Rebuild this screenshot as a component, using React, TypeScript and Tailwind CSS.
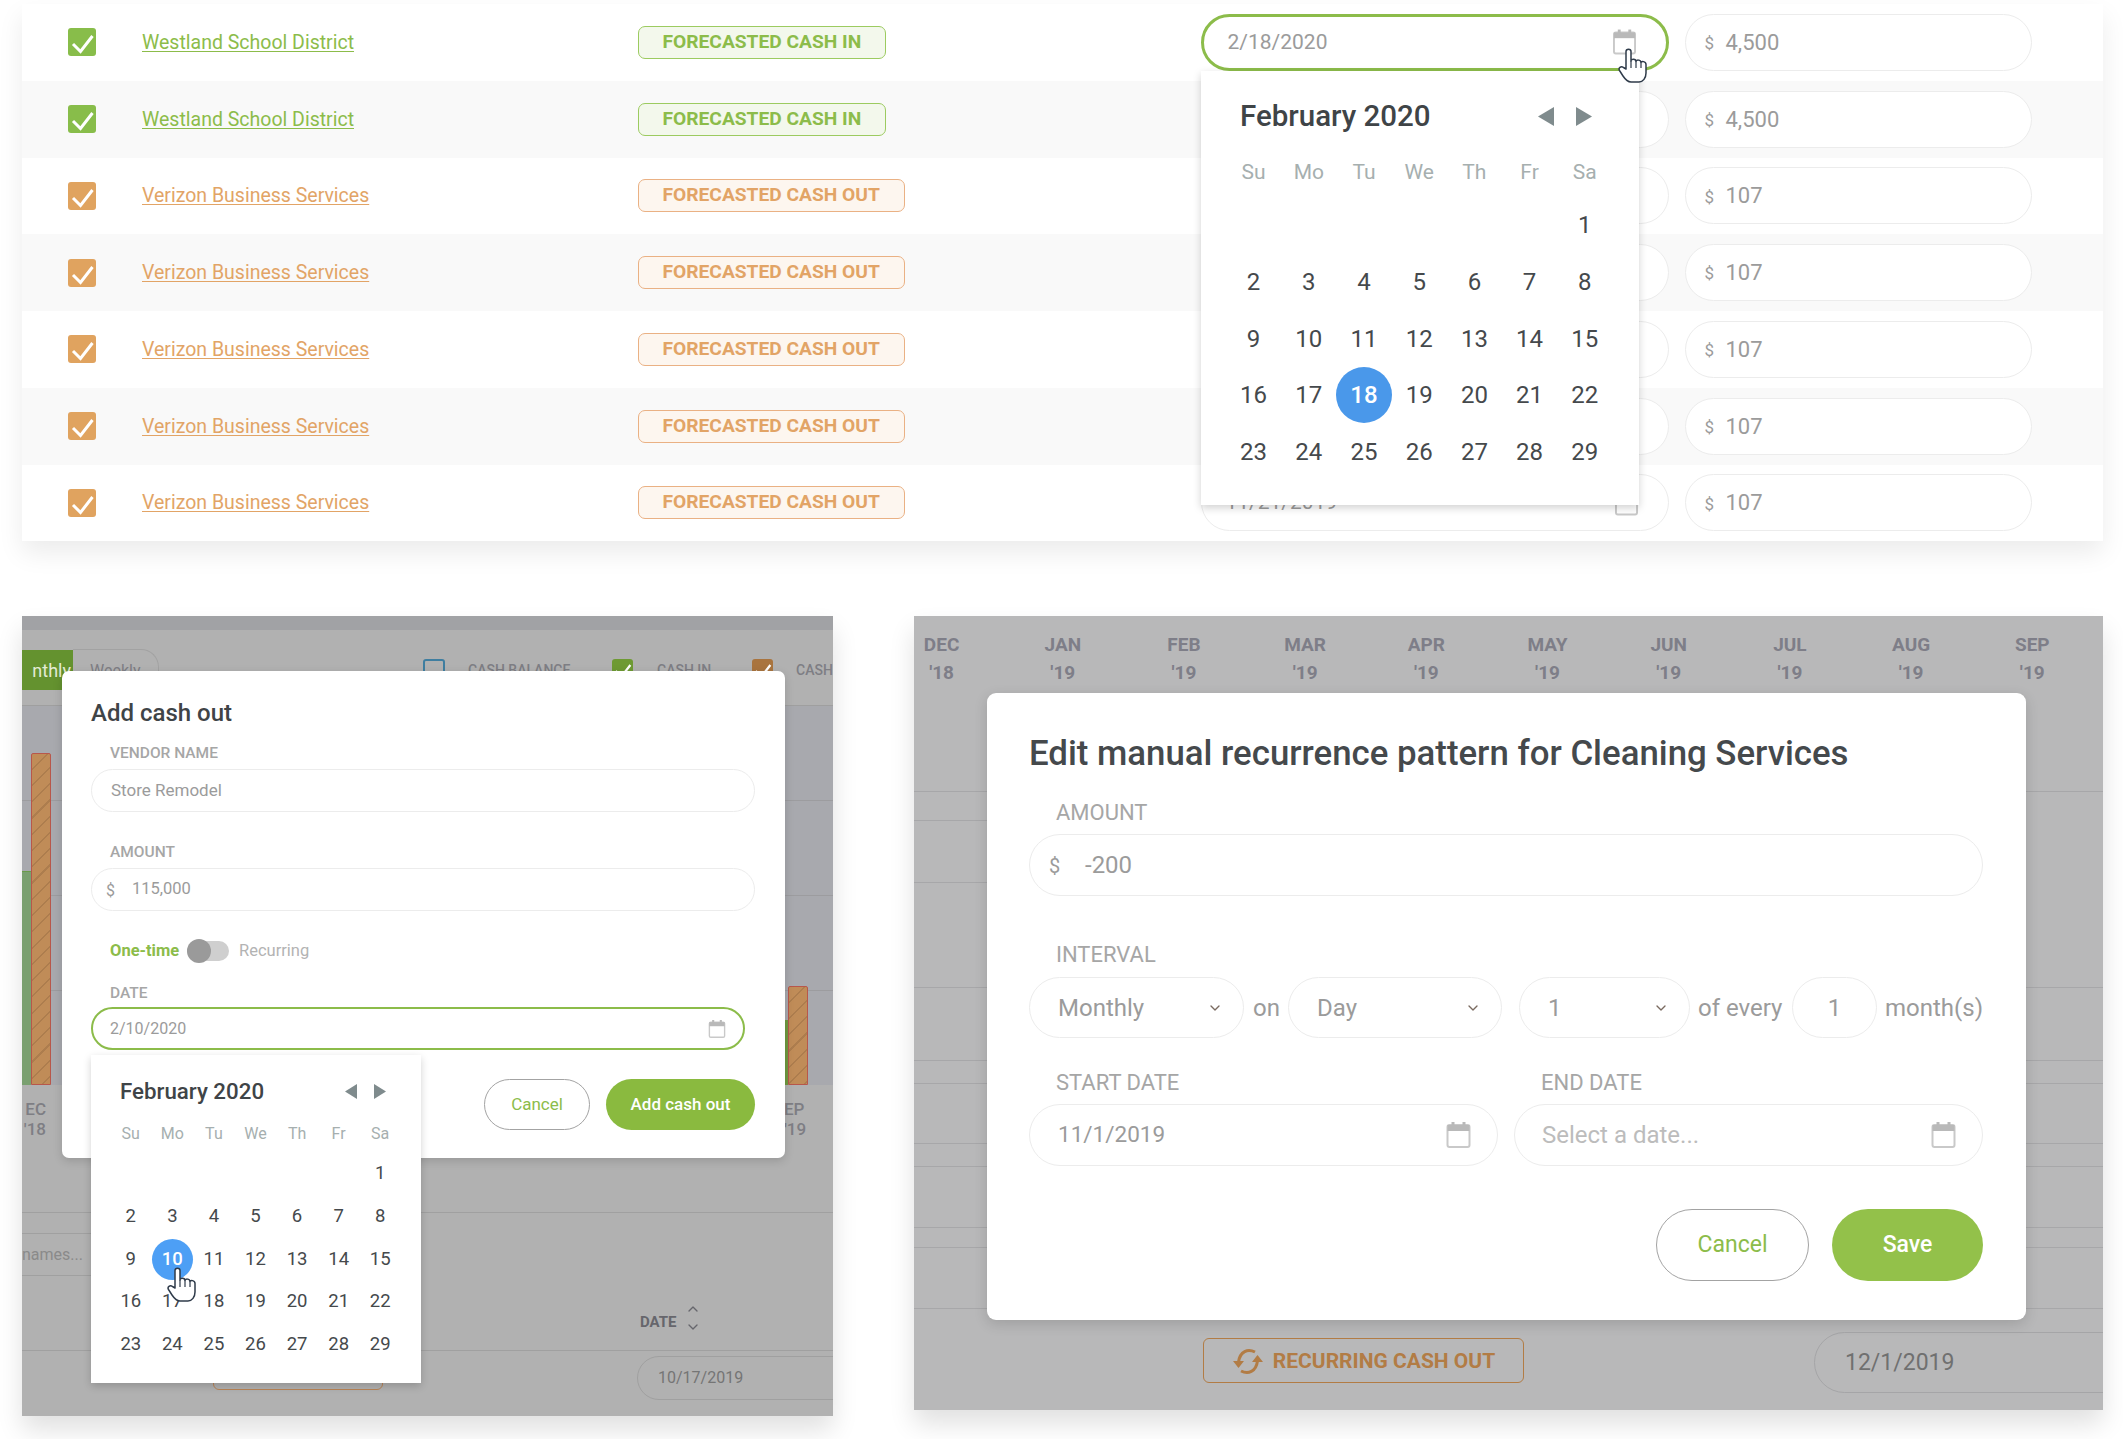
import { ChevronDown, ChevronUp } from "lucide-react";

// rows 2-6 sit behind the open calendar, so their date stays empty
const ROWS = [
  { kind: "in", date: "2/18/2020", amount: "4,500" },
  { kind: "in", date: "", amount: "4,500" },
  { kind: "out", date: "", amount: "107" },
  { kind: "out", date: "", amount: "107" },
  { kind: "out", date: "", amount: "107" },
  { kind: "out", date: "", amount: "107" },
  { kind: "out", date: "11/21/2019", amount: "107" },
];

const MONTHS = [
  ["DEC", "'18"],
  ["JAN", "'19"],
  ["FEB", "'19"],
  ["MAR", "'19"],
  ["APR", "'19"],
  ["MAY", "'19"],
  ["JUN", "'19"],
  ["JUL", "'19"],
  ["AUG", "'19"],
  ["SEP", "'19"],
];

const WEEKDAYS = ["Su", "Mo", "Tu", "We", "Th", "Fr", "Sa"];

const FEB_2020 = [
  "", "", "", "", "", "", "1",
  "2", "3", "4", "5", "6", "7", "8",
  "9", "10", "11", "12", "13", "14", "15",
  "16", "17", "18", "19", "20", "21", "22",
  "23", "24", "25", "26", "27", "28", "29",
];

const CAL_SIZE = {
  lg: {
    wrap: "pt-[25px] pb-[25px] pl-[25px] w-[438px]",
    inner: "w-[386.4px]",
    title: "text-[29.5px] ml-[14px]",
    titleRow: "h-[40px]",
    arrows: "gap-[22px] mr-[20px]",
    arrow: "w-[16px] h-[19px]",
    head: "h-[40px] mt-[17px] text-[21px]",
    cell: "h-[56.7px] text-[24px]",
    circle: "w-[56px] h-[56px]",
    days: "mt-[4px]",
    selected: "bg-[#4a98ea]",
  },
  sm: {
    wrap: "pt-[21px] pb-[17px] pl-[19px] w-[330px]",
    inner: "w-[291px]",
    title: "text-[22.3px] ml-[10px]",
    titleRow: "h-[30px]",
    arrows: "gap-[17px] mr-[15px]",
    arrow: "w-[12px] h-[15px]",
    head: "h-[30px] mt-[13px] text-[16px]",
    cell: "h-[42.7px] text-[18.5px]",
    circle: "w-[41px] h-[41px]",
    days: "mt-[3.6px]",
    selected: "bg-[#4d9ff5]",
  },
};

function CalendarIcon({ className }: { className: string }) {
  return (
    <svg viewBox="0 0 24 26" className={className} fill="none">
      <rect x="1" y="3" width="22" height="22" rx="2" stroke="#c9c9c9" strokeWidth="2" />
      <rect x="1" y="3" width="22" height="6" fill="#b9b9b9" />
      <rect x="5" y="0" width="3" height="5" fill="#b9b9b9" />
      <rect x="16" y="0" width="3" height="5" fill="#b9b9b9" />
    </svg>
  );
}

function Check({ className }: { className: string }) {
  return (
    <svg viewBox="0 0 28 28" className={className} fill="none">
      <path d="M5 16 L12.5 23.5 L24.5 8" stroke="white" strokeWidth="3" />
    </svg>
  );
}

function Checkbox({ color }: { color: string }) {
  return (
    <div className={`w-[28px] h-[28px] rounded-[3px] shrink-0 ${color}`}>
      <Check className="w-[28px] h-[28px]" />
    </div>
  );
}

function Triangle({ dir, className }: { dir: "left" | "right"; className: string }) {
  return (
    <svg viewBox="0 0 16 19" className={className} preserveAspectRatio="none">
      <path d={dir === "left" ? "M16 0 V19 L0 9.5 Z" : "M0 0 V19 L16 9.5 Z"} fill="#7f8b8d" />
    </svg>
  );
}

function Calendar({ size, selected }: { size: "lg" | "sm"; selected: string }) {
  const s = CAL_SIZE[size];
  return (
    <div className={`bg-white shadow-[0_3px_8px_rgba(0,0,0,0.18)] ${s.wrap}`}>
      <div className={s.inner}>
        <div className={`flex items-center justify-between ${s.titleRow}`}>
          <span className={`font-medium text-[#3f4447] ${s.title}`}>February 2020</span>
          <div className={`flex items-center ${s.arrows}`}>
            <Triangle dir="left" className={s.arrow} />
            <Triangle dir="right" className={s.arrow} />
          </div>
        </div>
        <div className={`grid grid-cols-7 items-center text-center text-[#a6afaf] ${s.head}`}>
          {WEEKDAYS.map((d) => (
            <span key={d}>{d}</span>
          ))}
        </div>
        <div className={`grid grid-cols-7 text-[#45494c] ${s.days}`}>
          {FEB_2020.map((d, i) => (
            <div key={i} className={`flex items-center justify-center ${s.cell}`}>
              {d === selected ? (
                <span className={`rounded-full text-white flex items-center justify-center font-medium ${s.selected} ${s.circle}`}>
                  {d}
                </span>
              ) : (
                d
              )}
            </div>
          ))}
        </div>
      </div>
    </div>
  );
}

function HandCursor({ className }: { className: string }) {
  return (
    <svg viewBox="0 0 29 35" className={className} fill="white" stroke="#2f3b4a" strokeWidth="1.5" strokeLinejoin="round">
      <path d="M8 21 V3.5 C8 0.5 13 0.5 13 3.5 V13 C13 10.5 18 10.5 18 13.5 C18 11.5 23 11.5 23 14.5 C23 13 28 13 28 16.5 V25 C28 30 25 34 21 34 H13 C9 34 7 31 5 28 L1.5 22.5 C0 20 3 17.5 5.5 19.5 Z" />
      <path d="M13 13 V20 M18 13.5 V20 M23 14.5 V20" fill="none" strokeWidth="1.2" />
    </svg>
  );
}

function RecurringIcon() {
  return (
    <svg viewBox="0 0 32 27" className="w-[32px] h-[27px] shrink-0" fill="none" stroke="#b27c45" strokeWidth="3">
      <path d="M23 4 C16 0.5 8 3 6.5 14" />
      <path d="M9 23 C16 26.5 24 24 25.5 13" />
      <path d="M1 13 H12 L6.5 20 Z" fill="#b27c45" stroke="none" />
      <path d="M20 14 H31 L25.5 7 Z" fill="#b27c45" stroke="none" />
    </svg>
  );
}

function Row({ kind, date, amount, index }: { kind: string; date: string; amount: string; index: number }) {
  const isIn = kind === "in";
  const focused = index === 0;
  return (
    <div className={`relative h-[76.75px] flex items-center pl-[46px] ${index % 2 === 1 ? "bg-[#f9f9f9]" : "bg-white"}`}>
      <Checkbox color={isIn ? "bg-[#88bd4a]" : "bg-[#e0a35f]"} />
      <a className={`ml-[46px] w-[495.5px] text-[19.5px] underline underline-offset-2 ${isIn ? "text-[#8cbc4a]" : "text-[#e2a466]"}`}>
        {isIn ? "Westland School District" : "Verizon Business Services"}
      </a>
      <div className="w-[563px]">
        <span
          className={`inline-flex items-center h-[33px] px-[24px] rounded-[7px] border text-[19.2px] font-bold ${
            isIn ? "border-[#9ccb60] bg-[#f3f8ec] text-[#8cbc4a]" : "border-[#eab184] bg-[#fdf6ef] text-[#e2a466]"
          }`}
        >
          {isIn ? "FORECASTED CASH IN" : "FORECASTED CASH OUT"}
        </span>
      </div>
      <div
        className={`w-[468px] h-[57px] rounded-full flex items-center justify-between pl-[24px] pr-[30px] bg-white text-[21px] text-[#9b9b9b] border ${
          focused ? "border-[3px] border-[#8cbc4a]" : "border-[#ececec]"
        }`}
      >
        <span>{date}</span>
        <CalendarIcon className="w-[23px] h-[26px]" />
      </div>
      <div className="ml-[16px] w-[347px] h-[57px] rounded-full border border-[#ececec] bg-white flex items-center pl-[19px] text-[#9b9b9b]">
        <span className="text-[17px] w-[21px] mt-[3px]">$</span>
        <span className="text-[22px]">{amount}</span>
      </div>
    </div>
  );
}

function TableCard() {
  return (
    <div className="relative ml-[22px] mt-[4px] w-[2081px] shadow-[0_12px_24px_rgba(0,0,0,0.08)]">
      {ROWS.map((r, i) => (
        <Row key={i} index={i} kind={r.kind} date={r.date} amount={r.amount} />
      ))}
      <div className="absolute left-[1179px] top-[67px] z-10">
        <Calendar size="lg" selected="18" />
      </div>
      <HandCursor className="absolute left-[1596px] top-[44px] w-[29px] h-[35px] z-20" />
    </div>
  );
}

function AddCashOutPanel() {
  const bar = "border border-[#b8574b] rounded-t-[2px] bg-[repeating-linear-gradient(135deg,#c08c58_0,#c08c58_10px,#ad7d4e_10px,#ad7d4e_11.5px)]";
  return (
    <div className="relative w-[811px] h-[800px] bg-[#b1b1b1] overflow-hidden shadow-[0_14px_24px_rgba(0,0,0,0.12)] text-[#7e7e84]">
      {/* dimmed page behind the modal */}
      <div className="absolute inset-x-0 top-0 h-[14px] bg-[#a1a2a5]" />
      <div className="absolute inset-x-0 top-[89px] h-[380px] bg-[#a8a9ae] border-t border-[#9f9f9f]" />
      <div className="absolute inset-x-0 top-[184px] border-t border-[#9c9c9f]" />
      <div className="absolute inset-x-0 top-[279px] border-t border-[#9c9c9f]" />
      <div className="absolute inset-x-0 top-[374px] border-t border-[#9c9c9f]" />
      <div className="absolute inset-x-0 top-[596px] border-t border-[#a0a0a0]" />
      <div className="absolute inset-x-0 top-[734px] border-t border-[#a0a0a0]" />

      <div className="absolute left-0 top-[34px] w-[51px] h-[40px] bg-[#64922f] text-[#e3ebd5] text-[18px] flex items-center justify-end pr-[2px] overflow-hidden">
        nthly
      </div>
      <div className="absolute left-[51px] top-[33px] w-[86px] h-[40px] rounded-tr-[18px] border-t border-r border-[#a2a2a2] pl-[17px] pt-[9px] text-[16px]">
        Weekly
      </div>
      <div className="absolute left-[401px] top-[43px] w-[22px] h-[22px] rounded-[3px] border-2 border-[#3f7ea0]" />
      <span className="absolute left-[446px] top-[44px] text-[14px] font-medium">CASH BALANCE</span>
      <div className="absolute left-[590px] top-[43px] w-[21px] h-[22px] rounded-[3px] bg-[#6e9a33]">
        <Check className="w-[21px] h-[21px]" />
      </div>
      <span className="absolute left-[635px] top-[44px] text-[14px] font-medium">CASH IN</span>
      <div className="absolute left-[730px] top-[43px] w-[21px] h-[22px] rounded-[3px] bg-[#a9743e]">
        <Check className="w-[21px] h-[21px]" />
      </div>
      <span className="absolute left-[774px] top-[44px] text-[14px] font-medium">CASH</span>

      <div className="absolute left-0 top-[255px] w-[9px] h-[214px] bg-[#7aa070] border-t border-[#6a9a4a]" />
      <div className={`absolute left-[9px] top-[137px] w-[20px] h-[332px] ${bar}`} />
      <div className="absolute left-[763px] top-[404px] w-[3px] h-[65px] bg-[#6f9a40]" />
      <div className={`absolute left-[766px] top-[370px] w-[20px] h-[99px] ${bar}`} />

      <div className="absolute left-0 top-[483px] w-[24px] text-[17px] font-medium text-right leading-[20px]">
        EC
        <br />
        '18
      </div>
      <div className="absolute left-[762px] top-[483px] text-[17px] font-medium leading-[20px]">
        EP
        <br />
        '19
      </div>
      <div className="absolute left-0 top-[617px] w-[100px] h-[43px] border-y border-r border-[#a0a0a0] rounded-r-[20px] text-[#8a8a8a] text-[16px] flex items-center">
        names...
      </div>
      <span className="absolute left-[618px] top-[695px] text-[15px] font-bold text-[#66666c]">DATE</span>
      <div className="absolute left-[663px] top-[685px] text-[#66666c]">
        <ChevronUp className="w-[16px] h-[16px]" />
        <ChevronDown className="w-[16px] h-[16px] mt-[2px]" />
      </div>
      <div className="absolute left-[191px] top-[740px] w-[170px] h-[34px] border border-[#b98455] rounded-[6px]" />
      <div className="absolute left-[615px] top-[740px] w-[260px] h-[44px] rounded-full border border-[#a0a0a0] flex items-center pl-[20px] text-[16px] text-[#757575]">
        10/17/2019
      </div>

      {/* modal */}
      <div className="absolute left-[40px] top-[55px] w-[723px] h-[487px] bg-white rounded-[7px] shadow-[0_3px_10px_rgba(0,0,0,0.15)] text-[#9b9b9b]">
        <div className="flex flex-col pl-[29px] pr-[30px]">
          <h2 className="mt-[26px] text-[24px] font-medium text-[#3f4447] leading-[32px]">Add cash out</h2>
          <label className="mt-[14px] ml-[19px] text-[15.5px] font-medium text-[#a6a6a6] leading-[20px]">VENDOR NAME</label>
          <div className="mt-[6px] h-[43px] rounded-full border border-[#ececec] flex items-center pl-[19px] text-[17px]">
            Store Remodel
          </div>
          <label className="mt-[30px] ml-[19px] text-[15.5px] font-medium text-[#a6a6a6] leading-[20px]">AMOUNT</label>
          <div className="mt-[6px] h-[43px] rounded-full border border-[#ececec] flex items-center pl-[14px] text-[16.5px]">
            <span className="w-[26px] text-[16px] mt-[2px]">$</span>
            115,000
          </div>
          <div className="mt-[28px] ml-[19px] flex items-center h-[24px] text-[16.5px]">
            <span className="font-bold text-[#8cbc4a] w-[77px]">One-time</span>
            <div className="relative w-[42px] h-[20px] rounded-full bg-[#cfcfcf]">
              <div className="absolute left-0 top-[-2px] w-[24px] h-[24px] rounded-full bg-[#9a9a9a]" />
            </div>
            <span className="ml-[10px] text-[#b3b3b3]">Recurring</span>
          </div>
          <label className="mt-[20px] ml-[19px] text-[15.5px] font-medium text-[#a6a6a6] leading-[20px]">DATE</label>
          <div className="mt-[4px] w-[654px] h-[43px] rounded-full border-2 border-[#8cbc4a] flex items-center justify-between pl-[17px] pr-[17px] text-[16px]">
            2/10/2020
            <CalendarIcon className="w-[18px] h-[18px]" />
          </div>
          <div className="mt-[29px] flex justify-end gap-[16px] text-[17px]">
            <button className="w-[106px] h-[51px] rounded-full border border-[#a3a3a3] text-[#8cbc4a]">Cancel</button>
            <button className="w-[149px] h-[51px] rounded-full bg-[#8aba3f] text-white font-medium">Add cash out</button>
          </div>
        </div>
      </div>

      <div className="absolute left-[69px] top-[439px]">
        <Calendar size="sm" selected="10" />
      </div>
      <HandCursor className="absolute left-[145px] top-[651px] w-[29px] h-[35px]" />
    </div>
  );
}

function RecurrencePanel() {
  const pill = "rounded-full border border-[#ececec] flex items-center";
  return (
    <div className="relative ml-[81px] w-[1189px] h-[794px] bg-[#b8b8b9] overflow-hidden shadow-[0_14px_24px_rgba(0,0,0,0.12)]">
      <div className="absolute left-0 top-[15px] w-full flex">
        {MONTHS.map(([m, y]) => (
          <div key={m} className="w-[121.2px] shrink-0 text-center text-[19px] font-bold leading-[28px] text-[#7e7e88] first:ml-[-33px]">
            {m}
            <br />
            {y}
          </div>
        ))}
      </div>
      {/* grid lines behind the modal */}
      <div className="absolute inset-x-0 top-[175px] border-t border-[#a7a7a9]" />
      <div className="absolute left-0 w-[73px] top-[204px] border-t border-[#a7a7a9]" />
      <div className="absolute left-0 w-[73px] top-[266px] border-t border-[#a7a7a9]" />
      <div className="absolute inset-x-0 top-[371px] border-t border-[#a7a7a9]" />
      <div className="absolute inset-x-0 top-[444px] border-t border-[#a7a7a9]" />
      <div className="absolute inset-x-0 top-[467px] border-t border-[#a7a7a9]" />
      <div className="absolute inset-x-0 top-[527px] border-t border-[#a7a7a9]" />
      <div className="absolute inset-x-0 top-[550px] border-t border-[#a7a7a9]" />
      <div className="absolute inset-x-0 top-[611px] border-t border-[#a7a7a9]" />
      <div className="absolute inset-x-0 top-[631px] border-t border-[#a7a7a9]" />
      <div className="absolute inset-x-0 top-[692px] border-t border-[#a7a7a9]" />
      <div className="absolute left-[289px] top-[722px] w-[321px] h-[45px] rounded-[6px] border border-[#b27c45] flex items-center justify-center gap-[9px] pt-[1px] text-[#b27c45] text-[21px] font-bold">
        <RecurringIcon />
        RECURRING CASH OUT
      </div>
      <div className="absolute left-[900px] top-[716px] w-[320px] h-[61px] rounded-full border border-[#a5a5a7] flex items-center pl-[30px] text-[23px] text-[#707070]">
        12/1/2019
      </div>

      {/* modal */}
      <div className="absolute left-[73px] top-[77px] w-[1039px] h-[627px] bg-white rounded-[9px] shadow-[0_4px_14px_rgba(0,0,0,0.14)] pl-[42px] pr-[43px] text-[#9b9b9b]">
        <h2 className="mt-[39px] text-[34.8px] font-medium text-[#45494c] leading-[42px]">
          Edit manual recurrence pattern for Cleaning Services
        </h2>
        <div className="mt-[25px] ml-[27px] text-[22px] leading-[28px] text-[#a6a6a6]">AMOUNT</div>
        <div className={`mt-[7px] h-[62px] pl-[19px] text-[24px] ${pill}`}>
          <span className="w-[36px] text-[20px] mt-[2px]">$</span>
          -200
        </div>
        <div className="mt-[45px] ml-[27px] text-[22px] leading-[28px] text-[#a6a6a6]">INTERVAL</div>
        <div className="mt-[8px] flex items-center text-[24px]">
          <div className={`w-[215px] h-[61px] pl-[28px] pr-[20px] justify-between ${pill}`}>
            Monthly <ChevronDown className="w-[16px] h-[16px] text-[#7a6a60]" />
          </div>
          <span className="ml-[9px] w-[35px]">on</span>
          <div className={`w-[214px] h-[61px] pl-[28px] pr-[20px] justify-between ${pill}`}>
            Day <ChevronDown className="w-[16px] h-[16px] text-[#7a6a60]" />
          </div>
          <div className={`ml-[17px] w-[171px] h-[61px] pl-[28px] pr-[20px] justify-between ${pill}`}>
            1 <ChevronDown className="w-[16px] h-[16px] text-[#7a6a60]" />
          </div>
          <span className="ml-[8px] w-[94px]">of every</span>
          <div className={`w-[85px] h-[61px] justify-center ${pill}`}>1</div>
          <span className="ml-[8px]">month(s)</span>
        </div>
        <div className="mt-[31px] flex text-[22px] leading-[28px] text-[#a6a6a6]">
          <span className="ml-[27px] w-[485px]">START DATE</span>
          <span>END DATE</span>
        </div>
        <div className="mt-[7px] flex gap-[16px]">
          <div className={`w-[469px] h-[62px] pl-[28px] pr-[26px] justify-between text-[22.5px] ${pill}`}>
            11/1/2019
            <CalendarIcon className="w-[25px] h-[26px]" />
          </div>
          <div className={`w-[469px] h-[62px] pl-[27px] pr-[26px] justify-between text-[24px] text-[#bcbcbc] ${pill}`}>
            Select a date...
            <CalendarIcon className="w-[25px] h-[26px]" />
          </div>
        </div>
        <div className="mt-[43px] flex justify-end gap-[23px] text-[23px]">
          <button className="w-[153px] h-[72px] rounded-full border border-[#a3a3a3] text-[#8cbc4a]">Cancel</button>
          <button className="w-[151px] h-[72px] rounded-full bg-[#93c14a] text-white font-medium">Save</button>
        </div>
      </div>
    </div>
  );
}

export default function App() {
  return (
    <div className="w-[2123px] h-[1439px] bg-white overflow-hidden font-['Roboto',sans-serif]">
      <TableCard />
      <div className="flex ml-[22px] mt-[75px] items-start">
        <AddCashOutPanel />
        <RecurrencePanel />
      </div>
    </div>
  );
}
